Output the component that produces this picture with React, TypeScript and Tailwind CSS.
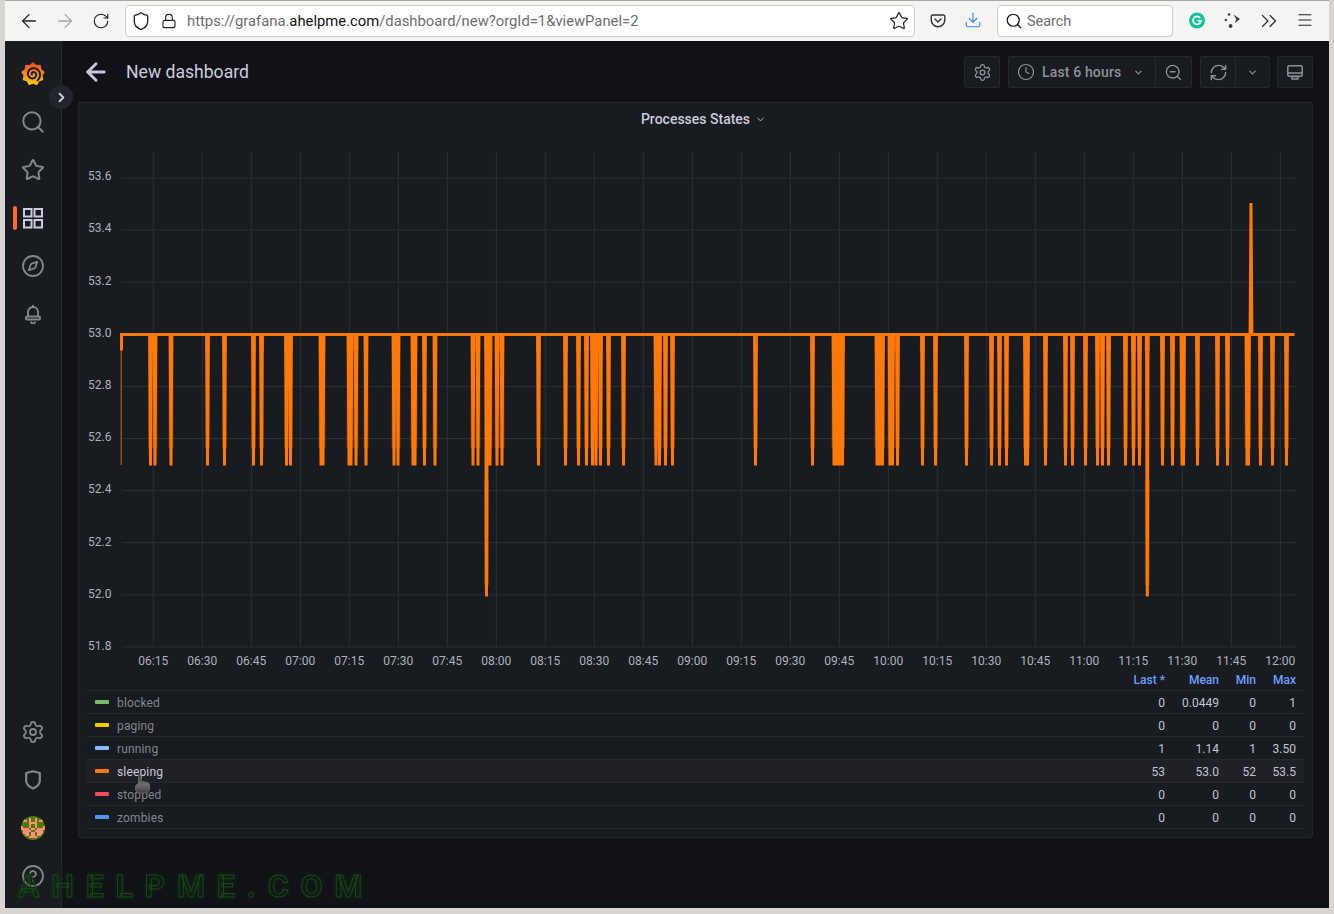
import React from "react";
import {
  ArrowLeft, ArrowRight, RotateCw, Shield, Lock, Star, Search, Download, ChevronRight, Settings,
  Clock, ZoomOut, RefreshCw, ChevronDown, Compass, CircleHelp, Menu, ChevronsRight,
} from "lucide-react";

const Y0 = 334.5;
const LOW: number[] = [150.5, 155, 171, 207.5, 224.5, 253.5, 261.5, 286.5, 290.5, 321, 323, 349, 351, 356, 366, 394, 398, 413, 415, 424.5, 435, 473, 478, 490, 497, 502,
  538.5, 565.5, 578.5, 586.5, 592.5, 596, 600.5, 608.5, 623.5, 656, 659.5, 665.5, 672.5, 755.5, 812.5, 834, 837, 840, 842.5, 877, 880, 882.5, 890, 892.5, 897.5,
  922.5, 935.5, 966.5, 991.5, 999.5, 1006.5, 1025.5, 1027.5, 1045.5, 1065.5, 1072.5, 1085.5, 1097.5, 1102.5, 1108.5, 1125.5, 1133.5, 1139.5, 1162.5, 1172.5, 1182, 1183.5, 1197.5, 1217.5, 1227.5, 1247, 1248.5, 1260.5, 1272.5, 1286.5];

const rect = (x: number, hw: number, y1: number, y2: number) => `M${x - hw} ${y1}H${x + hw}V${y2}H${x - hw}Z `;
const trap = (x: number, hw1: number, hw2: number, y1: number, y2: number) =>
  `M${x - hw1} ${y1}L${x + hw1} ${y1}L${x + hw2} ${y2}L${x - hw2} ${y2}Z `;
const core =
  LOW.map((x) => rect(x, 2.4, Y0, 351) + trap(x, 2.2, 1.5, 351, 465.5)).join("") +
  [486.5, 1147.3].map((x) => rect(x, 2.4, Y0, 351) + trap(x, 2.2, 1.9, 351, 480) + trap(x, 1.9, 1.5, 480, 596.5)).join("") +
  trap(1251, 2.4, 1.5, Y0, 203);
const fringe =
  LOW.map((x) => rect(x, 2.5, 351, 448)).join("") +
  [486.5, 1147.3].map((x) => rect(x, 2.5, 480, 585)).join("");

const xTicks = Array.from({ length: 24 }, (_, i) => {
  const m = 6 * 60 + 15 + i * 15;
  return { x: 153.3 + i * 49, t: `${String(Math.floor(m / 60)).padStart(2, "0")}:${String(m % 60).padStart(2, "0")}` };
});
const yTicks: [string, number][] = [["53.6", 180], ["53.4", 232], ["53.2", 285], ["53.0", 337], ["52.8", 389], ["52.6", 441], ["52.4", 493], ["52.2", 546], ["52.0", 598], ["51.8", 650]];

const legend = [
  { n: "blocked", c: "bg-[#73bf69]", v: ["0", "0.0449", "0", "1"] },
  { n: "paging", c: "bg-[#f2cc0c]", v: ["0", "0", "0", "0"] },
  { n: "running", c: "bg-[#8ab8ff]", v: ["1", "1.14", "1", "3.50"] },
  { n: "sleeping", c: "bg-[#ff780a]", v: ["53", "53.0", "52", "53.5"], hover: true },
  { n: "stopped", c: "bg-[#f2495c]", v: ["0", "0", "0", "0"] },
  { n: "zombies", c: "bg-[#5794f2]", v: ["0", "0", "0", "0"] },
];

const avatar = [
  "............",
  ".#..#..#..#.",
  ".##.#..#.##.",
  "....####....",
  "....#..#....",
  "#...#..#...#",
  "####.##.####",
  ".####..####.",
  ".###.##.###.",
  "..##.##.##..",
  "....####....",
  "............",
];

const gearPts = Array.from({ length: 18 }, (_, i) => {
  const a = (i * Math.PI) / 9 - Math.PI / 2;
  const r = i % 2 === 0 ? 11 : 8.8;
  return `${(12 + r * Math.cos(a)).toFixed(2)},${(12 + r * Math.sin(a)).toFixed(2)}`;
}).join(" ");
const spiral = Array.from({ length: 60 }, (_, i) => {
  const t = i / 59;
  const a = t * Math.PI * 3.4 + Math.PI * 0.9;
  const r = 1 + t * 6.6;
  return `${(12 + r * Math.cos(a)).toFixed(2)},${(12.3 + r * Math.sin(a)).toFixed(2)}`;
}).join(" ");

function GrafanaLogo() {
  return (
    <svg width="24" height="24" viewBox="0 0 24 24">
      <defs>
        <linearGradient id="gf" x1="0" y1="0" x2="0" y2="1">
          <stop offset="0" stopColor="#ee4f26" />
          <stop offset="1" stopColor="#fbca0a" />
        </linearGradient>
      </defs>
      <polygon points={gearPts} fill="url(#gf)" stroke="url(#gf)" strokeWidth="1.5" strokeLinejoin="round" />
      <polyline points={spiral} fill="none" stroke="#181b1f" strokeWidth="1.9" strokeLinecap="round" />
    </svg>
  );
}

const HButton = ({ className, children }: { className: string; children: React.ReactNode }) => (
  <div className={`absolute top-[56px] h-[32px] flex items-center bg-[#181b1f] border border-[#24272c] rounded-[2px] text-[#8f9099] ${className}`}>{children}</div>
);

const sideIcon = "text-[#85868d]";

export default function App() {
  return (
    <div className="relative w-[1334px] h-[914px] overflow-hidden bg-[#d8d5d0] font-[Roboto,sans-serif]">
      {/* browser toolbar */}
      <header className="absolute left-[5px] top-0 w-[1324px] h-[41px] bg-[#f6f4f2] border-t border-[#a8a5a1] font-['Noto_Sans',sans-serif]">
        <ArrowLeft className="absolute left-[13px] top-[9px] text-[#222]" size={22} strokeWidth={1.4} />
        <ArrowRight className="absolute left-[49px] top-[9px] text-[#a5a5a5]" size={22} strokeWidth={1.4} />
        <RotateCw className="absolute left-[87px] top-[11px] text-[#222]" size={18} strokeWidth={1.5} />
        <div className="absolute left-[120px] top-[4px] w-[790px] h-[32px] bg-white border border-[#cfcac4] rounded-[4px]">
          <Shield className="absolute left-[5px] top-[5px] text-[#222]" size={20} strokeWidth={1.6} />
          <Lock className="absolute left-[35px] top-[7px] text-[#222]" size={16} strokeWidth={1.7} />
          <div className="absolute left-[61px] top-[5px] text-[14.8px] leading-[20px] text-[#6d6d6d] whitespace-nowrap">
            https://grafana.<span className="text-[#111]">ahelpme.com</span>/dashboard/new?orgId=1&amp;viewPanel=2
          </div>
          <Star className="absolute left-[763px] top-[5px] text-[#222]" size={20} strokeWidth={1.5} />
        </div>
        <svg className="absolute left-[925px] top-[12px]" width="16" height="16" viewBox="0 0 16 16" fill="none" stroke="#333" strokeWidth="1.4" strokeLinecap="round" strokeLinejoin="round">
          <path d="M2.5 2h11a1.3 1.3 0 0 1 1.3 1.3V7a6.8 6.8 0 0 1-13.6 0V3.3A1.3 1.3 0 0 1 2.5 2z" />
          <path d="M5 6l3 3 3-3" />
        </svg>
        <Download className="absolute left-[959px] top-[10px] text-[#3f8fe8]" size={18} strokeWidth={1.6} />
        <div className="absolute left-[992px] top-[4px] w-[176px] h-[32px] bg-white border border-[#cfcac4] rounded-[4px] flex items-center">
          <Search className="ml-[7px] text-[#111]" size={18} strokeWidth={1.6} />
          <span className="ml-[4px] mt-[1px] text-[14.4px] text-[#6d6d6d]">Search</span>
        </div>
        <svg className="absolute left-[1184px] top-[11px]" width="16" height="17" viewBox="0 0 16 16">
          <circle cx="8" cy="8" r="8" fill="#15c39a" />
          <path d="M11.2 5.4A4 4 0 1 0 12 8.4H8.6" fill="none" stroke="#fff" strokeWidth="1.7" />
        </svg>
        <svg className="absolute left-[1219px] top-[11px]" width="17" height="17" viewBox="0 0 17 17" fill="#3d3d3d">
          <circle cx="5" cy="2.5" r="1.3" />
          <circle cx="1.8" cy="8" r="1.2" />
          <circle cx="6.6" cy="14" r="1.9" />
          <path d="M9.500 2.500l6.500 4.500-5 4 1.200-4z" />
        </svg>
        <ChevronsRight className="absolute left-[1251px] top-[7px] text-[#333]" size={26} strokeWidth={1.2} />
        <Menu className="absolute left-[1291px] top-[10px] text-[#222]" size={18} strokeWidth={1.6} />
      </header>

      {/* grafana page */}
      <div className="absolute left-[5px] top-[41px] w-[1324px] h-[867px] bg-[#111217]" />

      {/* sidebar */}
      <aside className="absolute left-[5px] top-[41px] w-[57px] h-[867px] bg-[#181b1f] border-r border-[#25282d]">
        <div className="absolute left-[16px] top-[21px]"><GrafanaLogo /></div>
        <Search className={`absolute left-[15px] top-[68px] ${sideIcon}`} size={26} strokeWidth={1.8} />
        <Star className={`absolute left-[16px] top-[117px] ${sideIcon}`} size={24} strokeWidth={2} />
        <div className="absolute left-[8px] top-[165px] w-[4px] h-[24px] rounded-[2px] bg-[#ff6a2b]" />
        <svg className="absolute left-[18px] top-[167px]" width="20" height="21" viewBox="0 0 20 21" fill="none" stroke="#ccccdc" strokeWidth="2">
          <rect x="1" y="1" width="7.5" height="7.5" />
          <rect x="11.5" y="1" width="7.5" height="7.5" />
          <rect x="1" y="12" width="7.5" height="7.5" />
          <rect x="11.500" y="12" width="7.5" height="7.5" />
        </svg>
        <Compass className={`absolute left-[16px] top-[213px] ${sideIcon}`} size={24} strokeWidth={1.8} />
        <svg className="absolute left-[20px] top-[263px]" width="16" height="20" viewBox="0 0 16 20" fill="none" stroke="#85868d" strokeWidth="1.9" strokeLinejoin="round">
          <path d="M3 12.500V8a5 5 0 0 1 10 0v4.500" />
          <rect x="1" y="12.500" width="14" height="3" rx="1" />
          <path d="M8 1v2" />
          <path d="M6 17.500a2 2 0 0 0 4 0" />
        </svg>
        <Settings className={`absolute left-[16px] top-[679px] ${sideIcon}`} size={24} strokeWidth={1.8} />
        <svg className="absolute left-[20px] top-[729px]" width="16" height="20" viewBox="0 0 16 20" fill="none" stroke="#85868d" strokeWidth="2.2" strokeLinejoin="round">
          <path d="M1.200 3 8 1.200 14.800 3v8c0 3.500-3.200 5.800-6.800 7.500C4.400 16.800 1.200 14.500 1.200 11z" />
        </svg>
        <svg className="absolute left-[16px] top-[775px] rounded-full bg-[#4f7a0a]" width="24" height="24" viewBox="0 0 24 24" shapeRendering="crispEdges">
          {avatar.flatMap((row, r) =>
            row.split("").map((ch, c) => (ch === "#" ? <rect key={`${r}-${c}`} x={c * 2} y={r * 2} width="2" height="2" fill="#ff8f7c" /> : null))
          )}
        </svg>
        <CircleHelp className={`absolute left-[16px] top-[823px] ${sideIcon}`} size={24} strokeWidth={1.8} />
      </aside>
      <div className="absolute left-[49px] top-[85px] w-[24px] h-[24px] rounded-full bg-[#22252b] flex items-center justify-center text-[#ccccdc]">
        <ChevronRight size={15} strokeWidth={3} />
      </div>

      {/* top bar */}
      <ArrowLeft className="absolute left-[82px] top-[58px] text-[#c6c7d6]" size={28} strokeWidth={2.5} />
      <h1 className="absolute left-[126px] top-[60px] text-[17.6px] leading-[24px] font-normal text-[#ccccdc]">New dashboard</h1>
      <HButton className="left-[964px] w-[36px] justify-center"><Settings size={19} strokeWidth={1.7} /></HButton>
      <HButton className="left-[1008px] w-[184px]">
        <Clock className="ml-[8px]" size={18} strokeWidth={1.6} />
        <span className="ml-[7px] text-[14px] font-medium tracking-[0.15px] whitespace-nowrap">Last 6 hours</span>
        <ChevronDown className="ml-[12px]" size={11} strokeWidth={2.5} />
        <div className="ml-[11px] h-full w-[35px] border-l border-[#24272c] flex items-center justify-center">
          <ZoomOut size={19} strokeWidth={1.7} />
        </div>
      </HButton>
      <HButton className="left-[1200px] w-[70px]">
        <div className="w-[35px] h-full flex items-center justify-center border-r border-[#24272c]"><RefreshCw size={19} strokeWidth={1.8} /></div>
        <div className="flex-1 flex items-center justify-center"><ChevronDown size={11} strokeWidth={2.5} /></div>
      </HButton>
      <HButton className="left-[1277px] w-[36px] justify-center">
        <svg width="16" height="15" viewBox="0 0 16 15" fill="none" stroke="currentColor" strokeWidth="1.5" strokeLinejoin="round">
          <rect x="0.8" y="0.8" width="14.4" height="10.4" rx="1.5" />
          <path d="M1 8h14" />
          <path d="M5 14h6V11.500H5z" />
        </svg>
      </HButton>

      {/* panel */}
      <section className="absolute left-[78px] top-[102px] w-[1235px] h-[736px] bg-[#181b1f] border border-[#22252a] rounded-[2px]">
        <div className="h-[32px] pl-[16px] flex items-center justify-center gap-[5px] text-[14px] font-medium text-[#ccccdc]">
          <span>Processes States</span>
          <ChevronDown size={11} strokeWidth={2} />
        </div>
        <svg className="absolute left-0 top-[38px]" width="1233" height="540" viewBox="79 141 1233 540">
          {xTicks.map((t) => (
            <line key={t.t} x1={t.x} x2={t.x} y1="152" y2="647" stroke="#2c2f34" />
          ))}
          {yTicks.map((_, i) => (
            <line key={i} x1="122" x2="1296" y1={178 + i * 52.1} y2={178 + i * 52.1} stroke="#2c2f34" />
          ))}
          {yTicks.map(([t, y]) => (
            <text key={t} x="88" y={y} fontSize="12" fill="#b0b1bc" fontFamily="Roboto, sans-serif">{t}</text>
          ))}
          {xTicks.map((t) => (
            <text key={t.t} x={t.x} y="665" fontSize="12" fill="#b0b1bc" textAnchor="middle" fontFamily="Roboto, sans-serif">{t.t}</text>
          ))}
          <rect x="120.500" y="350" width="1.500" height="115" fill="#ff780a" opacity="0.55" />
          <rect x="120" y={Y0} width="3" height="16" fill="#ff780a" />
          <path d={fringe} fill="#ff780a" opacity="0.3" />
          <rect x="120" y={Y0 - 1.5} width="1174.5" height="3" fill="#ff780a" />
          <path d={core} fill="#ff780a" />
        </svg>

        <div className="absolute left-[8px] top-[567px] w-[1217px] text-[12px] leading-[23px]">
          <div className="flex h-[20px] items-center justify-end pr-[8px] font-medium text-[#6e9fff] whitespace-nowrap">
            <span>Last *</span>
            <span className="w-[54px] text-right">Mean</span>
            <span className="w-[37px] text-right">Min</span>
            <span className="w-[40px] text-right">Max</span>
          </div>
          <div className="border-t border-[#25282d]">
            {legend.map((r) => (
              <div key={r.n} className={`flex h-[23px] items-center pt-[2px] pr-[8px] border-b border-[#25282d] ${r.hover ? "bg-[#1f2126]" : ""}`}>
                <i className={`ml-[8px] -mt-[3px] w-[14px] h-[4px] rounded-[1px] ${r.c}`} />
                <span className={`ml-[8px] flex-1 tracking-[0.15px] ${r.hover ? "text-[#ccccdc]" : "text-[#84858c]"}`}>{r.n}</span>
                <span className="text-right text-[#c4c4d2]">{r.v[0]}</span>
                <span className="w-[54px] text-right text-[#c4c4d2]">{r.v[1]}</span>
                <span className="w-[37px] text-right text-[#c4c4d2]">{r.v[2]}</span>
                <span className="w-[40px] text-right text-[#c4c4d2]">{r.v[3]}</span>
              </div>
            ))}
          </div>
        </div>
      </section>

      {/* cursor */}
      <svg className="absolute left-[134px] top-[774px]" width="17" height="20" viewBox="0 0 17 20">
        <defs>
          <linearGradient id="hand" x1="0" y1="0" x2="0" y2="1">
            <stop offset="0" stopColor="#3a3a3a" />
            <stop offset="0.55" stopColor="#6e6e6e" />
            <stop offset="1" stopColor="#3c3c3c" />
          </linearGradient>
        </defs>
        <path d="M4.500 2c0-1.300 2.500-1.300 2.500 0v5l6 1.500c1.700.5 2.500 1.200 2.500 2.800v3.700c0 2.300-1.700 4-3.500 4H5.500C3 19 1.500 17.300 1.500 15v-2.500c0-1.500 1.300-2.500 3-2.500z" fill="url(#hand)" stroke="#8a8a8a" strokeWidth="0.5" />
      </svg>

      {/* watermark */}
      <div className="absolute left-[18px] top-[868px] text-[32px] leading-[37px] font-bold tracking-[11.8px] whitespace-nowrap font-['Liberation_Sans',sans-serif] text-transparent [-webkit-text-stroke:1px_#184818] [filter:drop-shadow(0_0_2px_#0e3a0e)]">
        AHELPME.COM
      </div>
    </div>
  );
}
